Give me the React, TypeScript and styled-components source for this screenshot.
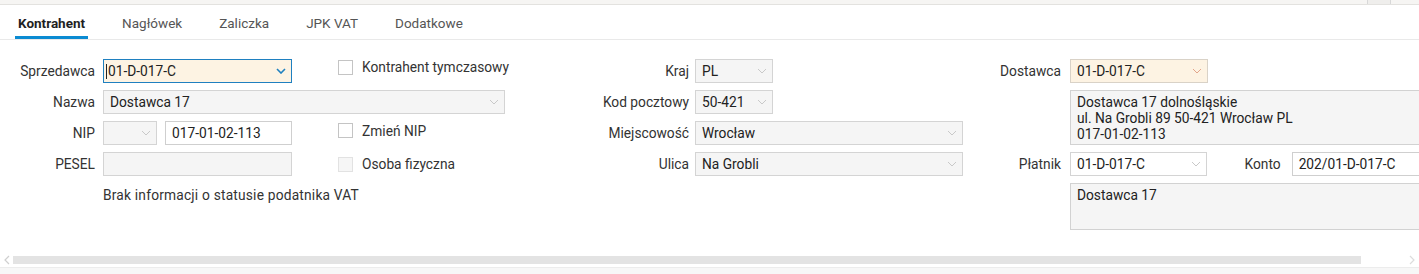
import React from 'react';
import styled, { createGlobalStyle } from 'styled-components';

const GlobalStyle = createGlobalStyle`
  html, body {
    margin: 0;
    padding: 0;
    background: #ffffff;
    font-family: Roboto, "Liberation Sans", Arial, sans-serif;
    font-size: 13.75px;
    color: #333;
  }
  * { box-sizing: border-box; }
`;

const Page = styled.div`
  width: 1419px;
  height: 274px;
  overflow: hidden;
  display: flex;
  flex-direction: column;
`;

const TopStrip = styled.div`
  height: 5px;
  flex-shrink: 0;
  background: #f6f5f3;
  border-bottom: 1px solid #e3e2df;
  display: flex;
  justify-content: flex-end;
  padding-right: 28px;
`;

const StripButton = styled.div`
  width: 24px;
  height: 4px;
  background: #efeeec;
  border-left: 1px solid #d8d8d8;
  border-right: 1px solid #d8d8d8;
`;

const TabBar = styled.div`
  height: 35px;
  flex-shrink: 0;
  display: flex;
  gap: 31px;
  padding-left: 15px;
  border-bottom: 1px solid #e9e9e9;
`;

const Tab = styled.div<{ $active?: boolean }>`
  display: flex;
  align-items: center;
  padding: 4px 3px 0;
  font-size: 13.5px;
  font-weight: ${(p) => (p.$active ? 700 : 400)};
  color: ${(p) => (p.$active ? '#1f1f1f' : '#555')};
  border-bottom: 3px solid ${(p) => (p.$active ? '#0b8bd2' : 'transparent')};
`;

const FormArea = styled.div`
  height: 212px;
  flex-shrink: 0;
  padding-top: 19px;
  display: flex;
  overflow: hidden;
`;

const LeftGroup = styled.div`
  width: 560px;
  flex-shrink: 0;
  display: grid;
  grid-template-columns: 95px 189px 1fr;
  grid-auto-rows: 24px;
  column-gap: 8px;
  row-gap: 7px;
  align-content: start;
`;

const MiddleGroup = styled.div`
  width: 403px;
  flex-shrink: 0;
  display: grid;
  grid-template-columns: 129px 268px;
  grid-auto-rows: 24px;
  column-gap: 6px;
  row-gap: 7px;
  align-content: start;
`;

const RightGroup = styled.div`
  flex-shrink: 0;
  display: grid;
  grid-template-columns: 98px 370px;
  grid-template-rows: 24px 55px 24px 47px;
  column-gap: 9px;
  row-gap: 7px;
  align-content: start;
`;

const Label = styled.div`
  display: flex;
  align-items: center;
  justify-content: flex-end;
  white-space: nowrap;
  color: #333;
`;

const Field = styled.div<{ $w?: number; $bg?: string; $border?: string }>`
  position: relative;
  width: ${(p) => (p.$w ? `${p.$w}px` : '100%')};
  height: 24px;
  display: flex;
  align-items: center;
  padding: 0 6px;
  background: ${(p) => p.$bg || '#ffffff'};
  border: 1px solid ${(p) => p.$border || '#cfcfcf'};
  color: #222;
  white-space: nowrap;
`;

const Span2 = styled.div`
  grid-column: span 2;
  display: flex;
  align-items: center;
`;

const Chevron = styled.svg`
  position: absolute;
  right: 5px;
  top: 50%;
  margin-top: -3px;
`;

const Caret = styled.span`
  display: inline-block;
  width: 1px;
  height: 15px;
  background: #222;
  margin-left: -4px;
  margin-right: 1px;
`;

const InlineFields = styled.div`
  display: flex;
  gap: 8px;
`;

const CheckRow = styled.label<{ $shift: number }>`
  display: flex;
  align-items: center;
  gap: 9px;
  padding-left: 38px;
  margin-top: ${(p) => p.$shift}px;
  color: #333;
  white-space: nowrap;
`;

const Box = styled.span<{ $disabled?: boolean }>`
  width: 15px;
  height: 15px;
  flex-shrink: 0;
  border: 1px solid ${(p) => (p.$disabled ? '#e2e2e2' : '#c4c4c4')};
  background: ${(p) => (p.$disabled ? '#f6f6f6' : '#ffffff')};
`;

const Note = styled.div`
  grid-column: 2 / span 2;
  display: flex;
  align-items: center;
  letter-spacing: 0.2px;
  color: #333;
`;

const TextBox = styled.div<{ $h: number }>`
  width: 100%;
  height: ${(p) => p.$h}px;
  background: #f5f5f5;
  border: 1px solid #d2d2d2;
  padding: 3px 6px;
  line-height: 16px;
  color: #222;
  white-space: nowrap;
`;

const PayerRow = styled.div`
  display: flex;
  align-items: center;
`;

const PayerLabel = styled.span`
  margin-left: 38px;
  margin-right: 11px;
  color: #333;
`;

const ScrollRow = styled.div`
  height: 16px;
  flex-shrink: 0;
  display: flex;
  align-items: center;
  padding: 0 4px;
  border-bottom: 1px solid #ececec;
`;

const ScrollThumb = styled.div`
  width: 1348px;
  height: 8px;
  margin-left: 3px;
  background: #e3e3e3;
`;

const ScrollArrow = styled.svg<{ $right?: boolean }>`
  flex-shrink: 0;
  margin-left: ${(p) => (p.$right ? 'auto' : '0')};
`;

const Footer = styled.div`
  flex: 1;
  background: #f7f7f7;
`;

const Down = ({ color = '#c9c9c9', bold = false }: { color?: string; bold?: boolean }) => (
  <Chevron width="10" height="6" viewBox="0 0 10 6">
    <polyline
      points="1,1 5,5 9,1"
      fill="none"
      stroke={color}
      strokeWidth={bold ? 1.6 : 1}
    />
  </Chevron>
);

const Check = ({ label, disabled, shift = -2 }: { label: string; disabled?: boolean; shift?: number }) => (
  <CheckRow $shift={shift}>
    <Box $disabled={disabled} />
    {label}
  </CheckRow>
);

const GRAY = '#f5f5f5';
const CREAM = '#fdf3e3';

export default function App() {
  return (
    <Page>
      <GlobalStyle />
      <TopStrip>
        <StripButton />
      </TopStrip>
      <TabBar>
        <Tab $active>Kontrahent</Tab>
        <Tab>Nagłówek</Tab>
        <Tab>Zaliczka</Tab>
        <Tab>JPK VAT</Tab>
        <Tab>Dodatkowe</Tab>
      </TabBar>

      <FormArea>
        <LeftGroup>
          <Label>Sprzedawca</Label>
          <Field $bg={CREAM} $border="#1f80c0">
            <Caret />
            01-D-017-C
            <Down color="#1f80c0" bold />
          </Field>
          <Check label="Kontrahent tymczasowy" shift={-8} />

          <Label>Nazwa</Label>
          <Span2>
            <Field $w={402} $bg={GRAY} $border="#d4d4d4">
              Dostawca 17
              <Down />
            </Field>
          </Span2>

          <Label>NIP</Label>
          <InlineFields>
            <Field $w={54} $bg={GRAY} $border="#d4d4d4">
              <Down />
            </Field>
            <Field $w={127}>017-01-02-113</Field>
          </InlineFields>
          <Check label="Zmień NIP" shift={-5} />

          <Label>PESEL</Label>
          <Field $bg={GRAY} $border="#d4d4d4" />
          <Check label="Osoba fizyczna" disabled shift={0} />

          <Note>Brak informacji o statusie podatnika VAT</Note>
        </LeftGroup>

        <MiddleGroup>
          <Label>Kraj</Label>
          <Field $w={78} $bg={GRAY} $border="#d4d4d4">
            PL
            <Down />
          </Field>

          <Label>Kod pocztowy</Label>
          <Field $w={78} $bg={GRAY} $border="#d4d4d4">
            50-421
            <Down />
          </Field>

          <Label>Miejscowość</Label>
          <Field $bg={GRAY} $border="#d4d4d4">
            Wrocław
            <Down />
          </Field>

          <Label>Ulica</Label>
          <Field $bg={GRAY} $border="#d4d4d4">
            Na Grobli
            <Down />
          </Field>
        </MiddleGroup>

        <RightGroup>
          <Label>Dostawca</Label>
          <Field $w={138} $bg={CREAM} $border="#d9d2c7">
            01-D-017-C
            <Down color="#e3a58a" />
          </Field>

          <div />
          <TextBox $h={55}>
            Dostawca 17 dolnośląskie
            <br />
            ul. Na Grobli 89 50-421 Wrocław PL
            <br />
            017-01-02-113
          </TextBox>

          <Label>Płatnik</Label>
          <PayerRow>
            <Field $w={138} $border="#d4d4d4">
              01-D-017-C
              <Down />
            </Field>
            <PayerLabel>Konto</PayerLabel>
            <Field $w={150}>202/01-D-017-C</Field>
          </PayerRow>

          <div />
          <TextBox $h={47}>Dostawca 17</TextBox>
        </RightGroup>
      </FormArea>

      <ScrollRow>
        <ScrollArrow width="6" height="10" viewBox="0 0 6 10">
          <polyline points="5,1 1,5 5,9" fill="none" stroke="#cfcfcf" strokeWidth="1.2" />
        </ScrollArrow>
        <ScrollThumb />
        <ScrollArrow $right width="6" height="10" viewBox="0 0 6 10">
          <polyline points="1,1 5,5 1,9" fill="none" stroke="#dcdcdc" strokeWidth="1.2" />
        </ScrollArrow>
      </ScrollRow>
      <Footer />
    </Page>
  );
}
